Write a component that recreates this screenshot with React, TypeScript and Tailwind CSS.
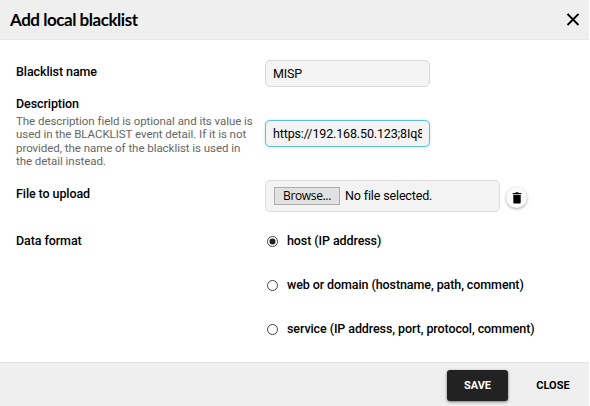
import { useState, type ReactNode } from "react";

const formats = [
  { value: "host", label: "host (IP address)" },
  { value: "web", label: "web or domain (hostname, path, comment)" },
  { value: "service", label: "service (IP address, port, protocol, comment)" },
];

type FieldProps = {
  label: string;
  help?: string;
  className?: string;
  children: ReactNode;
};

function Field({ label, help, className = "", children }: FieldProps) {
  return (
    <div className={`flex ${className}`}>
      <div className="w-[249px] shrink-0">
        <div className="text-[12.5px] font-medium leading-4 tracking-[-0.09px]">{label}</div>
        {help && (
          <p className="mt-[3px] w-[239px] text-[11.5px] leading-[13.33px] tracking-[-0.045px] text-[#666]">
            {help}
          </p>
        )}
      </div>
      {children}
    </div>
  );
}

export default function App() {
  const [format, setFormat] = useState("host");

  return (
    <div className="h-[406px] w-[590px] overflow-hidden bg-white">
      <div className="flex h-full w-[589px] flex-col font-['Roboto',sans-serif] text-black">
        <header className="flex h-10 shrink-0 items-center justify-between border-b border-[#e6e6e6] bg-[#efefef] pl-[10px] pr-[9px]">
          <h1 className="font-['Lato',sans-serif] text-[17px] font-bold leading-5 tracking-[-0.46px]">
            Add local blacklist
          </h1>
          <button type="button" aria-label="Close dialog">
            <svg width="14" height="14" viewBox="0 0 14 14" stroke="#000" strokeWidth="1.8">
              <path d="M1.5 1l11 11M12.5 1l-11 11" />
            </svg>
          </button>
        </header>

        <main className="flex flex-1 flex-col pl-4">
          <Field label="Blacklist name" className="h-14 pt-6">
            <input
              defaultValue="MISP"
              className="-mt-1 h-[27px] w-[165px] rounded-[5px] border border-[#d8d8d8] bg-[#f4f4f4] px-[7px] pb-px text-[12.5px] tracking-[-0.14px] outline-none"
            />
          </Field>
          <Field
            label="Description"
            help="The description field is optional and its value is used in the BLACKLIST event detail. If it is not provided, the name of the blacklist is used in the detail instead."
            className="h-[84px]"
          >
            <input
              defaultValue="https://192.168.50.123;8Iq8"
              className="mt-6 h-[27px] w-[165px] rounded-[5px] border border-[#5fc1d2] bg-[#f4f4f4] px-[7px] pb-px text-[12.5px] tracking-[-0.14px] shadow-[0_0_2px_rgba(95,193,210,0.5)] outline-none"
            />
          </Field>
          <Field label="File to upload" className="h-[53px] pt-[6px]">
            <div className="-mt-[6px] flex h-8 w-[235px] items-center rounded-[5px] border border-[#dcdcdc] bg-[#f3f3f3] pl-2 text-[12.5px] tracking-[-0.14px]">
              <button
                type="button"
                className="h-[18px] w-[66px] border border-[#adadad] bg-[#e1e1e1] font-['Open_Sans',sans-serif] text-[12px] leading-4 tracking-[-0.35px]"
              >
                Browse...
              </button>
              <span className="ml-[5px]">No file selected.</span>
            </div>
            <button
              type="button"
              aria-label="Remove file"
              className="ml-[6px] mt-[1px] flex size-[21px] items-center justify-center rounded-full bg-[#fafafa] shadow-[0_1px_3px_rgba(0,0,0,0.35)]"
            >
              <svg width="10" height="12" viewBox="0 0 10 12">
                <path d="M.7 1h2.5L4 .3h2L6.8 1h2.5v1.2H.7zM1.3 2.9h7.4v7.6q0 1-1 1H2.3q-1 0-1-1z" />
              </svg>
            </button>
          </Field>
          <Field label="Data format">
            <div className="flex flex-col gap-7 pl-0.5">
              {formats.map((f) => (
                <label
                  key={f.value}
                  className="flex h-4 items-center gap-[9px] whitespace-nowrap text-[12.5px] font-medium tracking-[-0.09px]"
                >
                  <input
                    type="radio"
                    name="format"
                    className="sr-only"
                    checked={format === f.value}
                    onChange={() => setFormat(f.value)}
                  />
                  <span className="mt-px flex size-[11px] items-center justify-center rounded-full border border-[#444] bg-white">
                    {format === f.value && <span className="size-[5px] rounded-full bg-[#222] ring-[0.5px] ring-[#222]" />}
                  </span>
                  {f.label}
                </label>
              ))}
            </div>
          </Field>
        </main>

        <footer className="flex h-11 shrink-0 items-start border-t border-[#e4e4e4] bg-[#efefef] pl-[447px] pt-[7px] text-[11px] font-bold">
          <button
            type="button"
            className="h-[31px] w-[61px] rounded-[3px] bg-[#222] pt-px text-white shadow-[0_1px_3px_rgba(0,0,0,0.5)]"
          >
            SAVE
          </button>
          <button type="button" className="ml-[14px] h-[31px] w-[62px] pt-px">
            CLOSE
          </button>
        </footer>
      </div>
    </div>
  );
}
